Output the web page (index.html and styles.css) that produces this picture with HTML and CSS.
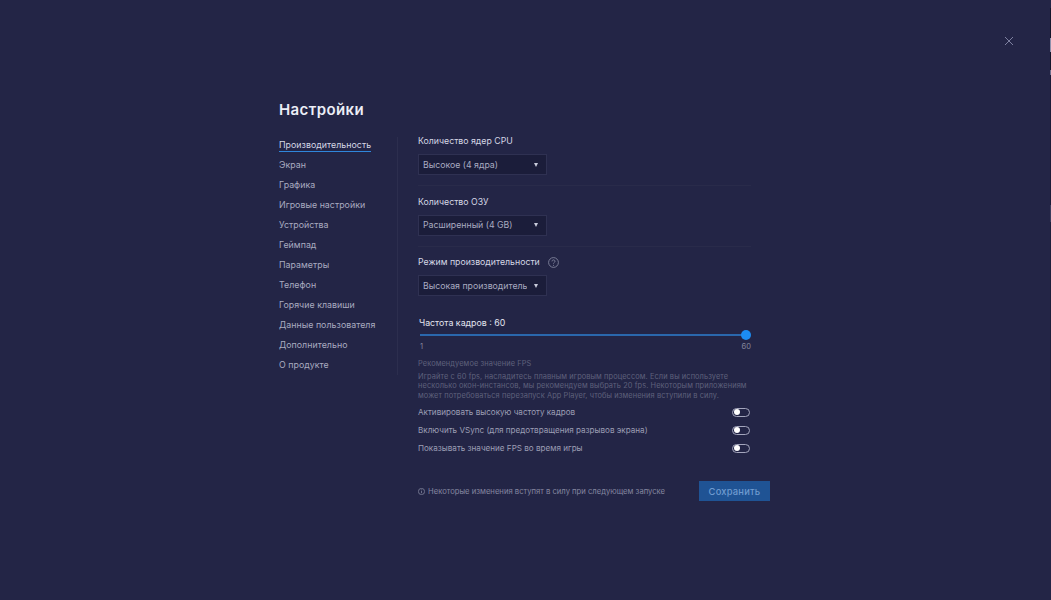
FILE: index.html
```html
<!DOCTYPE html>
<html lang="ru">
<head>
    <meta charset="UTF-8">
    <title>Настройки</title>
    <link rel="stylesheet" href="styles.css">
</head>
<body>
    <!-- Close -->
    <button class="close" aria-label="Закрыть">
        <svg width="10" height="10" viewBox="0 0 10 10"><path d="M1 1l8 8M9 1l-8 8" stroke="#7d80a0" stroke-width="1" fill="none"/></svg>
    </button>

    <!-- Sliver of the window behind, along the right edge -->
    <div class="edge"></div>

    <div class="settings">
        <h1 class="title">Настройки</h1>

        <div class="columns">
            <!-- Side menu -->
            <ul class="menu">
                <li class="menu-item active"><span>Производительность</span></li>
                <li class="menu-item"><span>Экран</span></li>
                <li class="menu-item"><span>Графика</span></li>
                <li class="menu-item"><span>Игровые настройки</span></li>
                <li class="menu-item"><span>Устройства</span></li>
                <li class="menu-item"><span>Геймпад</span></li>
                <li class="menu-item"><span>Параметры</span></li>
                <li class="menu-item"><span>Телефон</span></li>
                <li class="menu-item"><span>Горячие клавиши</span></li>
                <li class="menu-item"><span>Данные пользователя</span></li>
                <li class="menu-item"><span>Дополнительно</span></li>
                <li class="menu-item"><span>О продукте</span></li>
            </ul>

            <div class="panel">
                <!-- CPU -->
                <div class="group">
                    <div class="label">Количество ядер CPU</div>
                    <div class="select"><span class="select-text">Высокое (4 ядра)</span><i class="arrow"></i></div>
                </div>

                <!-- RAM -->
                <div class="group">
                    <div class="label">Количество ОЗУ</div>
                    <div class="select"><span class="select-text">Расширенный (4 GB)</span><i class="arrow"></i></div>
                </div>

                <!-- Performance mode -->
                <div class="group last">
                    <div class="label">Режим производительности
                        <svg class="help" width="11" height="11" viewBox="0 0 11 11"><circle cx="5.5" cy="5.5" r="4.9" stroke="#8d90a8" fill="none" stroke-width=".8"/><path d="M4 4.4c0-2 3-2 3 0 0 1-1.500 1-1.500 2.200" stroke="#8d90a8" fill="none" stroke-width=".8"/><circle cx="5.500" cy="8.200" r=".5" fill="#8d90a8"/></svg>
                    </div>
                    <div class="select"><span class="select-text">Высокая производительность</span><i class="arrow"></i></div>
                </div>

                <!-- Frame rate -->
                <div class="rate">
                    <div class="rate-title">Частота кадров : 60</div>
                    <div class="slider"><div class="knob"></div></div>
                    <div class="rate-scale"><span>1</span><span>60</span></div>
                </div>

                <div class="hint">
                    <div class="hint-title">Рекомендуемое значение FPS</div>
                    <p>Играйте с 60 fps, насладитесь плавным игровым процессом. Если вы используете<br>несколько окон-инстансов, мы рекомендуем выбрать 20 fps. Некоторым приложениям<br>может потребоваться перезапуск App Player, чтобы изменения вступили в силу.</p>
                </div>

                <div class="toggles">
                    <div class="toggle-row"><span>Активировать высокую частоту кадров</span><i class="toggle"></i></div>
                    <div class="toggle-row"><span>Включить VSync (для предотвращения разрывов экрана)</span><i class="toggle"></i></div>
                    <div class="toggle-row"><span>Показывать значение FPS во время игры</span><i class="toggle"></i></div>
                </div>

                <!-- Footer -->
                <div class="footer">
                    <div class="note">
                        <svg width="7" height="7" viewBox="0 0 7 7"><circle cx="3.500" cy="3.500" r="3.100" stroke="#8d90a8" fill="none" stroke-width=".7"/><path d="M3.500 3v2.200M3.500 1.500v.8" stroke="#8d90a8" stroke-width=".7"/></svg>
                        Некоторые изменения вступят в силу при следующем запуске
                    </div>
                    <button class="btn">Сохранить</button>
                </div>
            </div>
        </div>
    </div>
</body>
</html>
```

FILE: styles.css
```css
/* Global Reset */
* {
    margin: 0;
    padding: 0;
    box-sizing: border-box;
}

body {
    width: 1051px;
    height: 600px;
    overflow: hidden;
    background-color: #232546;
    font-family: 'Inter', 'Noto Sans', sans-serif;
    color: #c9cbdb;
    padding: 100px 0 0 279px;
    position: relative;
}

/* Close */
.close {
    position: absolute;
    top: 36px;
    left: 1004px;
    width: 10px;
    height: 10px;
    background: none;
    border: none;
    display: flex;
}

/* Right edge */
.edge {
    position: absolute;
    top: 0;
    right: 0;
    width: 1px;
    height: 600px;
    background: linear-gradient(to bottom,
        #232546 8px, #14152b 8px, #14152b 38px,
        #8e90ac 38px, #8e90ac 52px,
        #14152b 52px, #14152b 70px,
        #6d6f8c 70px, #6d6f8c 75px,
        #1b1c38 75px, #1b1c38 205px,
        #3a3c5c 205px, #3a3c5c 222px,
        #1d1f3b 222px, #1d1f3b 400px,
        #232546 400px);
}

.settings {
    width: 492px;
}

.title {
    font-size: 15px;
    font-weight: 600;
    line-height: 20px;
    letter-spacing: 0.4px;
    color: #eceef6;
    margin-bottom: 17px;
}

.columns {
    display: flex;
    align-items: flex-start;
}

/* Side menu */
.menu {
    list-style: none;
    width: 119px;
    height: 238px;
    flex-shrink: 0;
    border-right: 1px solid #2c2e4e;
}

.menu-item {
    height: 20px;
    line-height: 16px;
    font-size: 8.8px;
    letter-spacing: 0.04px;
    color: #a9abc0;
}

.menu-item.active {
    color: #d5d7e5;
}

.menu-item.active span {
    display: inline-block;
    height: 15px;
    border-bottom: 1px solid #2f86dc;
}

/* Right panel */
.panel {
    margin-left: 20px;
    width: 352px;
    margin-top: -3px;
}

.group {
    width: 333px;
    height: 52px;
    margin-bottom: 8.500px;
    border-bottom: 1px solid #292b4a;
}

.group.last {
    border-bottom: none;
    height: 61px;
    margin-bottom: 0;
}

.label {
    display: flex;
    align-items: center;
    gap: 8px;
    height: 14px;
    font-size: 8.75px;
    color: #d5d7e5;
    margin-bottom: 6px;
}

.select {
    width: 129px;
    height: 21px;
    display: flex;
    align-items: center;
    justify-content: space-between;
    padding: 0 8px 0 4px;
    background: #1b1d3a;
    border: 1px solid #2f3152;
    font-size: 8.75px;
    color: #a9abc0;
}

.select-text {
    width: 104px;
    overflow: hidden;
    white-space: nowrap;
}

.arrow {
    width: 0;
    height: 0;
    border-left: 2.500px solid transparent;
    border-right: 2.500px solid transparent;
    border-top: 4px solid #c9cbdb;
}

/* Frame rate */
.rate {
    width: 333px;
}

.rate-title {
    height: 14px;
    line-height: 14px;
    padding-left: 1px;
    font-size: 8.8px;
    color: #e2e4ee;
}

.slider {
    position: relative;
    height: 2px;
    margin: 4px 5px 0 2px;
    background: #2a67ac;
}

.knob {
    position: absolute;
    right: -5px;
    top: -4px;
    width: 10px;
    height: 10px;
    border-radius: 50%;
    background: #1c8cf2;
}

.rate-scale {
    display: flex;
    justify-content: space-between;
    margin-top: 6px;
    padding-left: 2px;
    height: 10px;
    line-height: 10px;
    font-size: 7.500px;
    color: #85879d;
}

/* Hint */
.hint {
    margin-top: 7px;
    font-size: 7.400px;
    line-height: 9.5px;
    letter-spacing: 0.1px;
    color: #5f617c;
    width: 340px;
    white-space: nowrap;
}

.hint-title {
    margin-bottom: 3px;
}

/* Toggles */
.toggles {
    margin-top: 3px;
}

.toggle-row {
    width: 333px;
    height: 18px;
    display: flex;
    align-items: center;
    justify-content: space-between;
    font-size: 8.100px;
    color: #9c9eb4;
}

.toggle {
    position: relative;
    width: 18px;
    height: 9px;
    border: 1px solid #a3a5bc;
    border-radius: 5px;
    margin-right: 1px;
}

.toggle::before {
    content: "";
    position: absolute;
    top: 0.500px;
    left: 1px;
    width: 6px;
    height: 6px;
    border-radius: 50%;
    background: #fff;
}

/* Footer */
.footer {
    display: flex;
    justify-content: space-between;
    align-items: center;
    margin-top: 24px;
}

.note {
    display: flex;
    align-items: center;
    gap: 3px;
    font-size: 7.670px;
    color: #8587a0;
}

.btn {
    width: 71px;
    height: 20px;
    background: #1f5394;
    border: none;
    font-family: inherit;
    font-size: 9.400px;
    font-weight: 500;
    letter-spacing: 0.2px;
    color: #6f9bd0;
}
```
